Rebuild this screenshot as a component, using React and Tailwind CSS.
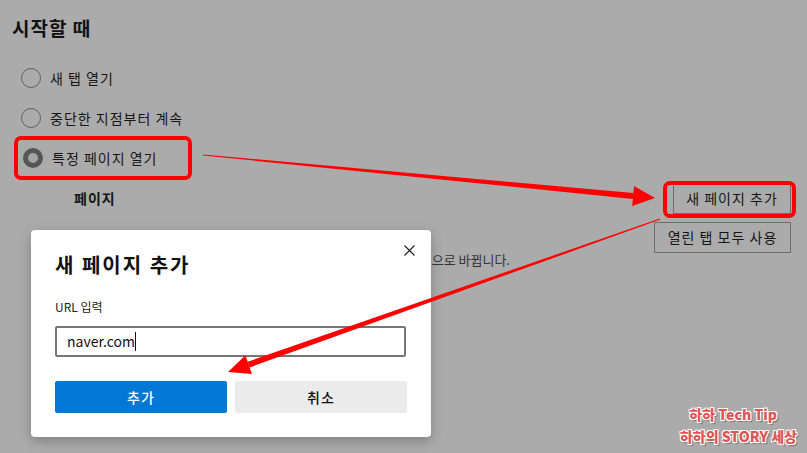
import React from 'react';

const font = { fontFamily: '"Noto Sans CJK KR", "Noto Sans", sans-serif' };

function Radio({ checked, label }) {
  return (
    <div className="flex items-center h-10 gap-[9px] pl-[9px]">
      {checked ? (
        <span className="w-5 h-5 rounded-full border-[5px] border-[#565656] bg-[#a4a4a4] box-border" />
      ) : (
        <span className="w-5 h-5 rounded-full border-[1.5px] border-[#5e5e5e] box-border" />
      )}
      <span className="text-[14px] text-[#151515] tracking-[1px]">{label}</span>
    </div>
  );
}

function Arrows() {
  return (
    <svg className="absolute inset-0 pointer-events-none" width="807" height="453" viewBox="0 0 807 453">
      <polygon points="203,154.5 203,155.5 632.8,198.9 633.4,192.9" fill="#ff0000" />
      <polygon points="655,198 632.2,205.9 634,185.9" fill="#ff0000" />
      <polygon points="660.2,219.5 659.8,218.5 247.7,361.8 249.7,367.4" fill="#ff0000" />
      <polygon points="228,372 245.4,355.2 252,374" fill="#ff0000" />
    </svg>
  );
}

export default function App() {
  return (
    <div className="relative w-[807px] h-[453px] overflow-hidden bg-[#ababab]" style={font}>
      <div className="pl-3 pt-[14px] pr-4">
        <h2 className="text-[19px] font-bold text-[#111] leading-[28px] tracking-[1px]">시작할 때</h2>
        <div className="mt-[16px]">
          <Radio label="새 탭 열기" />
          <Radio label="중단한 지점부터 계속" />
          <div className="ml-[2px] w-[178px] h-[44px] -mt-[2px] mb-[2px] border-4 border-[#ff0000] rounded-[7px] flex items-center">
            <div className="-ml-[4px]">
              <Radio checked label="특정 페이지 열기" />
            </div>
          </div>
        </div>
        <div className="flex items-start justify-between mt-[1px]">
          <div className="pl-[62px] pt-[6px] text-[14px] font-bold text-[#151515] tracking-[1px]">페이지</div>
          <div className="flex flex-col items-end gap-[8px] mt-[1px]">
            <div className="relative w-[118px] h-[31px] border border-[#6d6d6d] flex items-center justify-center text-[14px] text-[#151515] tracking-[1px]">
              새 페이지 추가
              <span className="absolute -left-[11px] -right-[6px] -top-[3px] -bottom-[5px] border-4 border-[#ff0000] rounded-[7px]" />
            </div>
            <div className="w-[137px] h-[31px] border border-[#6d6d6d] flex items-center justify-center text-[14px] text-[#151515] tracking-[1px]">
              열린 탭 모두 사용
            </div>
          </div>
        </div>
        <div className="w-[498px] text-right whitespace-nowrap text-[13px] text-[#333] -mt-[3px]">
          페이지 목록이 현재 열려 있는 모든 탭으로 바뀝니다.
        </div>
      </div>

      <div className="absolute left-[31px] top-[230px] w-[400px] h-[207px] bg-white rounded-[4px] shadow-[0_4px_12px_rgba(0,0,0,0.25)] px-6">
        <button className="absolute right-[14px] top-[12px] w-4 h-4 flex items-center justify-center">
          <svg width="11" height="11" viewBox="0 0 11 11">
            <path d="M0.5 0.5L10.5 10.5M10.5 0.5L0.5 10.5" stroke="#222" strokeWidth="1.2" />
          </svg>
        </button>
        <div className="pt-[20px] text-[20px] font-bold text-[#111] leading-[30px] tracking-[2px]">새 페이지 추가</div>
        <div className="mt-[19px] text-[12px] text-[#222] leading-[16px]">URL 입력</div>
        <div className="mt-[11px] w-[351px] h-[31px] border-2 border-[#767676] rounded-[2px] flex items-center pl-[10px] text-[14px] text-[#111]">
          naver.com<span className="inline-block w-px h-[19px] bg-[#111]" />
        </div>
        <div className="mt-[24px] flex gap-2">
          <div className="w-[172px] h-[32px] bg-[#0078d4] rounded-[2px] flex items-center justify-center text-[14px] text-white font-medium tracking-[1px]">추가</div>
          <div className="w-[172px] h-[32px] bg-[#ebebeb] rounded-[2px] flex items-center justify-center text-[14px] text-[#111] font-medium tracking-[1px]">취소</div>
        </div>
      </div>

      <Arrows />

      <div className="absolute right-[10px] bottom-[6px] flex flex-col items-end leading-[22px] font-black text-[14px] text-[#e05555] [text-shadow:-1px_-1px_0_#fff,1px_-1px_0_#fff,-1px_1px_0_#fff,1px_1px_0_#fff,2px_2px_1px_#777]">
        <div className="mr-[20px]">하하 Tech Tip</div>
        <div>하하의 STORY 세상</div>
      </div>
    </div>
  );
}
